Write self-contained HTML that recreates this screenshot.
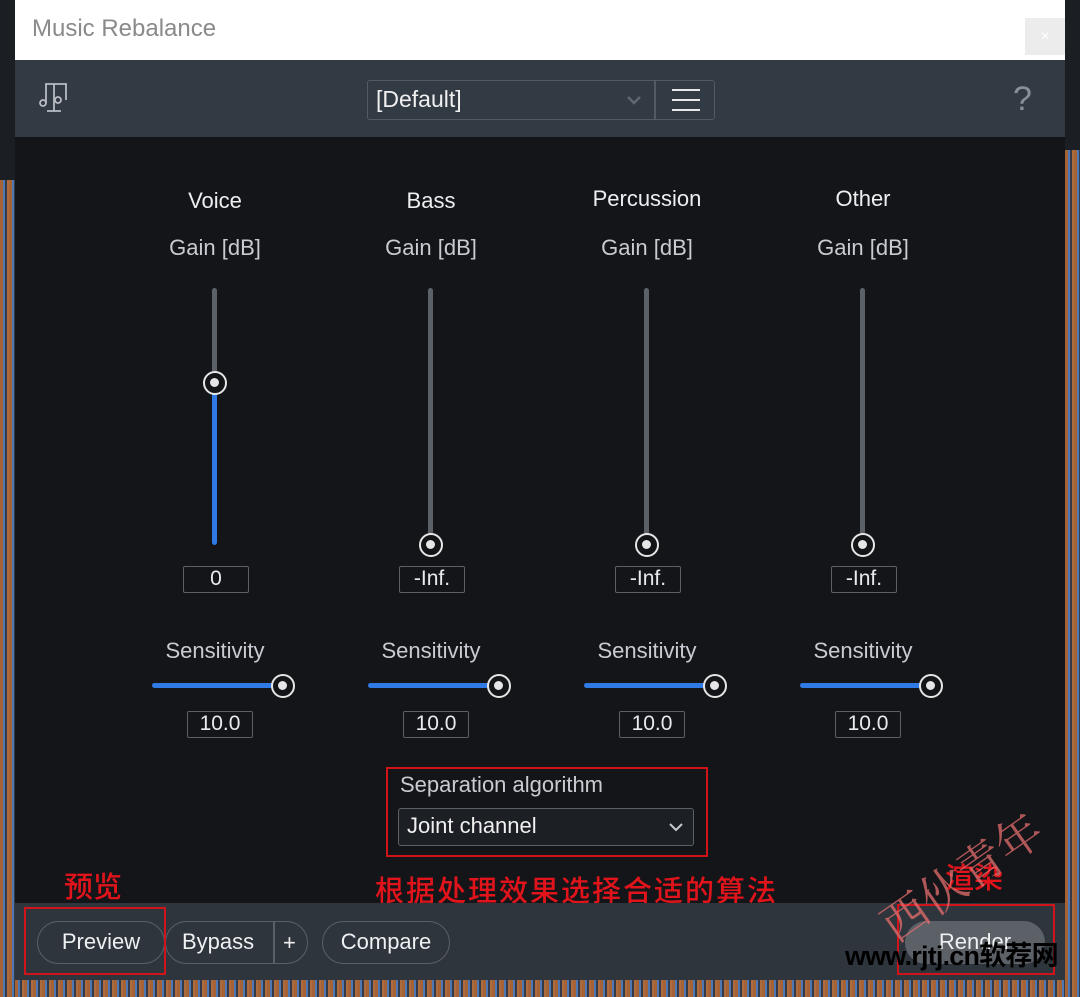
<!DOCTYPE html>
<html><head><meta charset="utf-8"><style>
*{margin:0;padding:0;box-sizing:border-box}
html,body{width:1080px;height:997px;overflow:hidden}
body{background:#1b1e22;position:relative;font-family:"Liberation Sans","Noto Sans CJK SC",sans-serif}
.abs{position:absolute;white-space:nowrap}
.wave{position:absolute;background:repeating-linear-gradient(90deg,#c8743a 0 3px,#5a8fd8 3px 5px,#3a4150 5px 7px,#d08045 7px 9px)}
.t{position:absolute;color:#c8ccd2;font-size:22px;text-align:center;width:200px}
.box{position:absolute;border:1.5px solid #5c6168;color:#e8eaec;font-size:21px;text-align:center;line-height:23px;height:27px;width:66px;border-radius:2px}
.knob{position:absolute;width:24px;height:24px;border:2.5px solid #e6e6e6;border-radius:50%;background:#131519}
.knob:after{content:"";position:absolute;left:5px;top:5px;width:9px;height:9px;border-radius:50%;background:#e6e6e6}
.red{color:#e0141a;font-size:29px;position:absolute;white-space:nowrap;font-family:"Noto Sans CJK SC",sans-serif;font-weight:500}
.pill{position:absolute;border:1.5px solid #5a6068;border-radius:22px;color:#eef0f2;font-size:22px;text-align:center;line-height:40px;height:43px}
</style></head><body>
<div class="wave" style="left:0;top:180px;width:15px;height:817px;opacity:.8"></div>
<div class="wave" style="left:1065px;top:150px;width:15px;height:847px;opacity:.8"></div>
<div class="wave" style="left:15px;top:980px;width:1050px;height:17px;opacity:.8"></div>
<div class="abs" style="left:15px;top:0;width:1050px;height:60px;background:#fff"></div>
<div class="abs" style="left:32px;top:15px;font-size:24px;color:#8a8a8a">Music Rebalance</div>
<div class="abs" style="left:1025px;top:18px;width:40px;height:37px;background:#ececec;color:#fff;text-align:center;line-height:37px">×</div>
<div class="abs" style="left:15px;top:60px;width:1050px;height:77px;background:#323a43"></div>
<svg class="abs" style="left:36px;top:80px" width="36" height="36" viewBox="0 0 36 36" fill="none" stroke="#b8bcc2" stroke-width="1.8"><circle cx="7" cy="23" r="3"/><circle cx="22" cy="20" r="3"/><path d="M10 23V4h20v16M18 4v27M11 31h14"/></svg>
<div class="abs" style="left:367px;top:80px;width:348px;height:40px;border:1.5px solid #525a63;border-radius:3px"></div>
<div class="abs" style="left:654px;top:80px;width:1.5px;height:40px;background:#525a63"></div>
<div class="abs" style="left:376px;top:86px;color:#f0f0f0;font-size:23px">[Default]</div>
<svg class="abs" style="left:625px;top:93px" width="18" height="14"><path d="M3 4l6 6 6-6" stroke="#5f6770" stroke-width="2.5" fill="none"/></svg>
<svg class="abs" style="left:670px;top:86px" width="32" height="28"><path d="M2 4h28M2 14h28M2 24h28" stroke="#e8e8e8" stroke-width="2"/></svg>
<div class="abs" style="left:1013px;top:80px;color:#8a9098;font-size:34px;font-weight:300">?</div>
<div class="abs" style="left:15px;top:137px;width:1050px;height:766px;background:#131519"></div>

<div class="t" style="left:115px;top:188px;color:#eceef0">Voice</div>
<div class="t" style="left:331px;top:188px;color:#eceef0">Bass</div>
<div class="t" style="left:547px;top:186px;color:#eceef0">Percussion</div>
<div class="t" style="left:763px;top:186px;color:#eceef0">Other</div>
<div class="t" style="left:115px;top:235px">Gain [dB]</div>
<div class="t" style="left:331px;top:235px">Gain [dB]</div>
<div class="t" style="left:547px;top:235px">Gain [dB]</div>
<div class="t" style="left:763px;top:235px">Gain [dB]</div>

<div class="abs" style="left:212px;top:288px;width:5px;height:95px;background:#5c6168;border-radius:3px"></div>
<div class="abs" style="left:212px;top:383px;width:5px;height:162px;background:#2f7ae5;border-radius:3px"></div>
<div class="knob" style="left:203px;top:371px"></div>
<div class="abs" style="left:428px;top:288px;width:5px;height:257px;background:#5c6168;border-radius:3px"></div>
<div class="knob" style="left:419px;top:533px"></div>
<div class="abs" style="left:644px;top:288px;width:5px;height:257px;background:#5c6168;border-radius:3px"></div>
<div class="knob" style="left:635px;top:533px"></div>
<div class="abs" style="left:860px;top:288px;width:5px;height:257px;background:#5c6168;border-radius:3px"></div>
<div class="knob" style="left:851px;top:533px"></div>

<div class="box" style="left:183px;top:566px">0</div>
<div class="box" style="left:399px;top:566px">-Inf.</div>
<div class="box" style="left:615px;top:566px">-Inf.</div>
<div class="box" style="left:831px;top:566px">-Inf.</div>

<div class="t" style="left:115px;top:638px">Sensitivity</div>
<div class="t" style="left:331px;top:638px">Sensitivity</div>
<div class="t" style="left:547px;top:638px">Sensitivity</div>
<div class="t" style="left:763px;top:638px">Sensitivity</div>
<div class="abs" style="left:152px;top:683px;width:130px;height:5px;background:#2f7ae5;border-radius:3px"></div>
<div class="knob" style="left:271px;top:674px"></div>
<div class="abs" style="left:368px;top:683px;width:130px;height:5px;background:#2f7ae5;border-radius:3px"></div>
<div class="knob" style="left:487px;top:674px"></div>
<div class="abs" style="left:584px;top:683px;width:130px;height:5px;background:#2f7ae5;border-radius:3px"></div>
<div class="knob" style="left:703px;top:674px"></div>
<div class="abs" style="left:800px;top:683px;width:130px;height:5px;background:#2f7ae5;border-radius:3px"></div>
<div class="knob" style="left:919px;top:674px"></div>

<div class="box" style="left:187px;top:711px">10.0</div>
<div class="box" style="left:403px;top:711px">10.0</div>
<div class="box" style="left:619px;top:711px">10.0</div>
<div class="box" style="left:835px;top:711px">10.0</div>

<div class="abs" style="left:386px;top:767px;width:322px;height:90px;border:2.5px solid #d0141a"></div>
<div class="abs" style="left:400px;top:772px;color:#c8ccd2;font-size:22px">Separation algorithm</div>
<div class="abs" style="left:398px;top:808px;width:296px;height:38px;border:1.5px solid #5c6168;border-radius:3px;background:#1c2025"></div>
<div class="abs" style="left:407px;top:813px;color:#f0f0f0;font-size:22px">Joint channel</div>
<svg class="abs" style="left:667px;top:820px" width="18" height="14"><path d="M3 4l6 6 6-6" stroke="#c8ccd2" stroke-width="2" fill="none"/></svg>

<div class="red" style="left:64px;top:864px">预览</div>
<div class="red" style="left:375px;top:868px;letter-spacing:2px">根据处理效果选择合适的算法</div>
<div class="red" style="left:945px;top:855px">渲染</div>

<div class="abs" style="left:15px;top:903px;width:1050px;height:77px;background:#2f353c"></div>
<div class="pill" style="left:37px;top:921px;width:128px">Preview</div>
<div class="pill" style="left:165px;top:921px;width:143px;text-align:left;padding-left:16px">Bypass</div>
<div class="abs" style="left:273px;top:922px;width:1.5px;height:41px;background:#5a6068"></div>
<div class="abs" style="left:283px;top:930px;color:#eee;font-size:22px">+</div>
<div class="pill" style="left:322px;top:921px;width:128px">Compare</div>
<div class="abs" style="left:24px;top:907px;width:142px;height:68px;border:2.5px solid #d0141a"></div>
<div class="pill" style="left:905px;top:921px;width:140px;background:#5c6168;border-color:#5c6168">Render</div>
<div class="abs" style="left:897px;top:904px;width:158px;height:71px;border:2.5px solid #d0141a"></div>
<div class="abs" style="left:885px;top:895px;color:rgba(230,110,110,.75);font-size:46px;transform:rotate(-35deg);transform-origin:left center;font-family:'Noto Serif CJK SC',serif">西伙青年</div>
<div class="abs" style="left:845px;top:934px;color:#000;font-size:27px;font-weight:bold;letter-spacing:-0.8px">www.rjtj.cn软荐网</div>
</body></html>
